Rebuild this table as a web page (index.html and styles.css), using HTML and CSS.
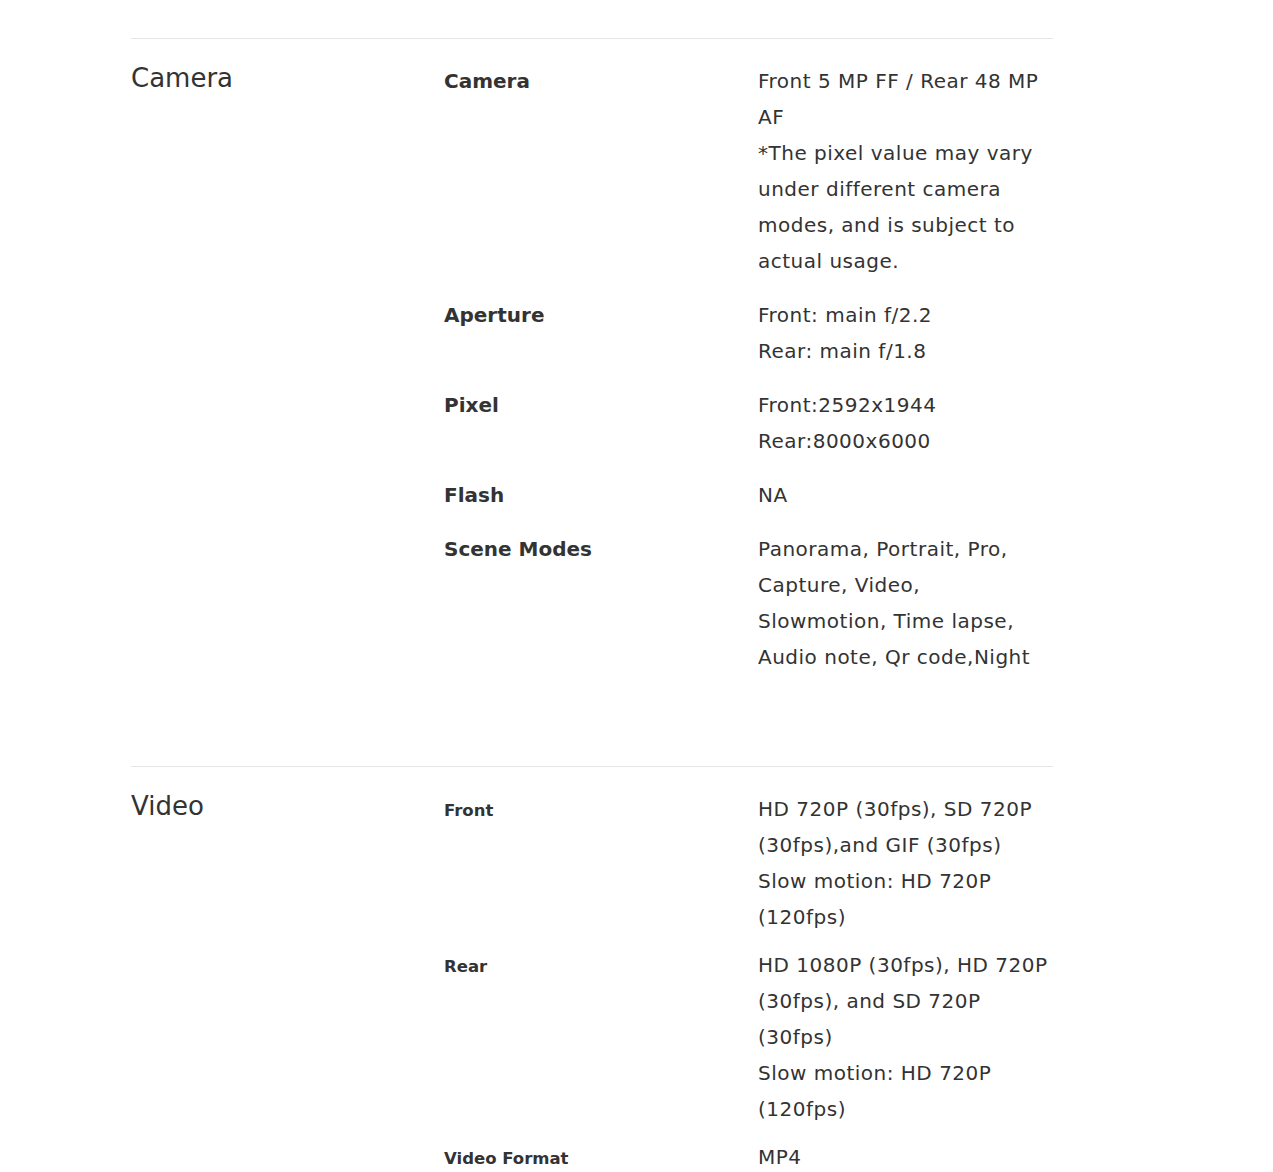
FILE: index.html
```html
<!DOCTYPE html>
<html lang="en">
<head>
<meta charset="utf-8">
<title>Specs</title>
<link rel="stylesheet" href="styles.css">
</head>
<body>
<main class="specs">
  <section class="spec-section spec-section--camera">
    <h2 class="spec-title">Camera</h2>
    <div class="spec-rows">
      <div class="spec-row">
        <div class="spec-label">Camera</div>
        <div class="spec-value">Front 5 MP FF / Rear 48 MP AF<br>*The pixel value may vary under different camera modes, and is subject to actual usage.</div>
      </div>
      <div class="spec-row">
        <div class="spec-label">Aperture</div>
        <div class="spec-value">Front: main f/2.2<br>Rear: main f/1.8</div>
      </div>
      <div class="spec-row">
        <div class="spec-label">Pixel</div>
        <div class="spec-value">Front:2592x1944<br>Rear:8000x6000</div>
      </div>
      <div class="spec-row">
        <div class="spec-label">Flash</div>
        <div class="spec-value">NA</div>
      </div>
      <div class="spec-row">
        <div class="spec-label">Scene Modes</div>
        <div class="spec-value">Panorama, Portrait, Pro, Capture, Video, Slowmotion, Time lapse, Audio note, Qr code,Night</div>
      </div>
    </div>
  </section>
  <section class="spec-section spec-section--video">
    <h2 class="spec-title">Video</h2>
    <div class="spec-rows">
      <div class="spec-row">
        <div class="spec-label spec-label--small">Front</div>
        <div class="spec-value">HD 720P (30fps), SD 720P (30fps),and GIF (30fps)<br>Slow motion: HD 720P (120fps)</div>
      </div>
      <div class="spec-row">
        <div class="spec-label spec-label--small">Rear</div>
        <div class="spec-value">HD 1080P (30fps), HD 720P (30fps), and SD 720P (30fps)<br>Slow motion: HD 720P (120fps)</div>
      </div>
      <div class="spec-row">
        <div class="spec-label spec-label--small">Video Format</div>
        <div class="spec-value">MP4</div>
      </div>
    </div>
  </section>
</main>
</body>
</html>
```
FILE: styles.css
```css
html, body {
  margin: 0;
  padding: 0;
  background: #ffffff;
}

body {
  font-family: "DejaVu Sans", "Liberation Sans", sans-serif;
  color: #333333;
}

.specs {
  width: 922px;
  margin-left: 131px;
  padding-top: 38px;
}

.spec-section {
  display: grid;
  grid-template-columns: 313px 1fr;
  border-top: 1px solid #e6e6e6;
  padding-top: 24px;
  padding-bottom: 91px;
}

.spec-title {
  margin: 0;
  font-size: 26px;
  line-height: 30px;
  font-weight: 400;
  color: #333333;
}

.spec-rows {
  display: flex;
  flex-direction: column;
  gap: 18px;
}

.spec-section--video .spec-rows {
  gap: 12px;
}

.spec-row {
  display: grid;
  grid-template-columns: 314px 294px;
  align-items: baseline;
}

.spec-label {
  font-size: 20px;
  line-height: 36px;
  font-weight: 700;
  color: #333333;
}

.spec-label--small {
  font-size: 16.5px;
}

.spec-value {
  font-size: 20px;
  line-height: 36px;
  letter-spacing: 0.5px;
  color: #333333;
}
```
